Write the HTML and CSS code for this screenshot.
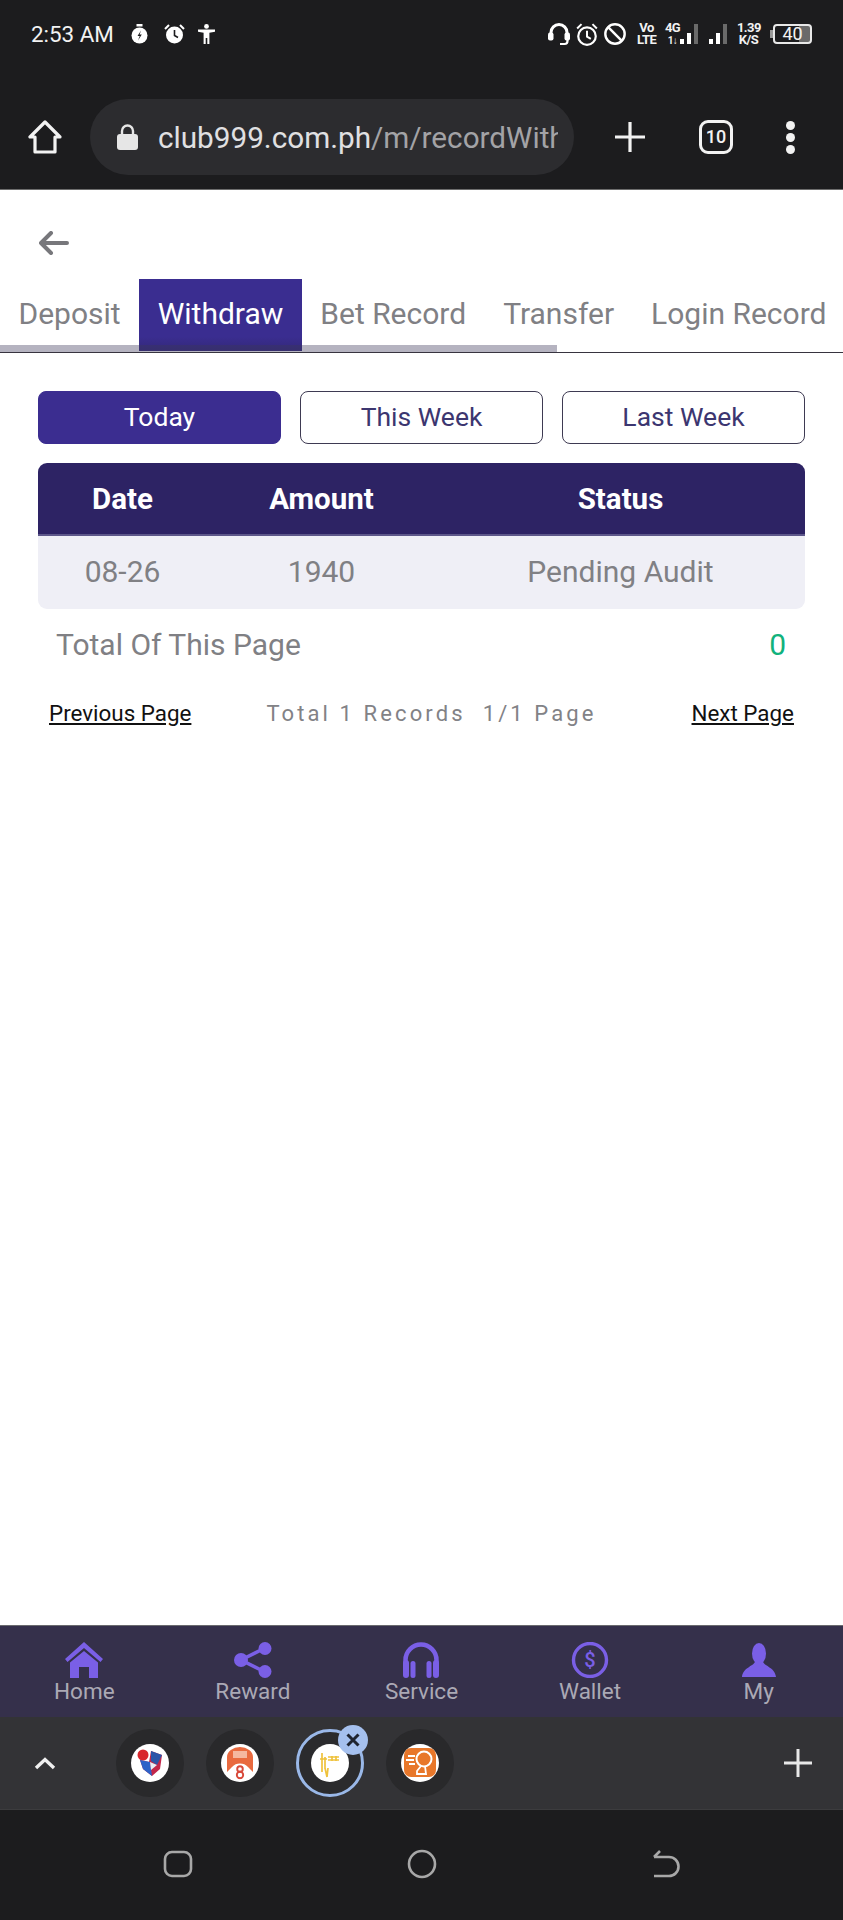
FILE: index.html
```html
<!DOCTYPE html>
<html lang="en">
<head>
    <meta charset="UTF-8">
    <meta name="viewport" content="width=device-width, initial-scale=1.0">
    <title>Withdraw Record</title>
    <link rel="stylesheet" href="styles.css">
</head>
<body>
<div id="phone">
    <!-- browser chrome -->
    <div class="status-bar">
        <div class="status-left">
            <span class="time">2:53 AM</span>
            <svg class="st-stopwatch" width="17" height="20" viewBox="0 0 17 20"><rect x="5.500" y="0" width="6" height="2.500" fill="#fff"/><circle cx="8.500" cy="11.500" r="8" fill="#fff"/><path d="M10 6.500L6.500 12h2.200L7 16.500l3.800-6H8.600z" fill="#1c1c1e"/></svg>
            <svg class="st-alarm" width="21" height="20" viewBox="0 0 21 20"><circle cx="10.500" cy="11" r="8.500" fill="#fff"/><path d="M1 5l4-4M20 5l-4-4" stroke="#fff" stroke-width="2"/><path d="M10.500 6v5.500l3.500 2" stroke="#1c1c1e" stroke-width="1.600" fill="none"/></svg>
            <svg class="st-person" width="17" height="20" viewBox="0 0 17 20"><circle cx="8.500" cy="2.400" r="2.400" fill="#fff"/><path d="M0 5.500h17v2.200l-5.600 1V20H9.300v-6H7.700v6H5.600V8.700L0 7.700z" fill="#fff"/></svg>
        </div>
        <div class="status-right">
            <svg class="st-head" width="22" height="24" viewBox="0 0 22 23"><path d="M3 15V10a8 8 0 0 1 16 0v5" stroke="#fff" stroke-width="3" fill="none"/><rect x="0" y="10" width="5.500" height="8" rx="2" fill="#fff"/><rect x="16.500" y="10" width="5.500" height="8" rx="2" fill="#fff"/><path d="M19.500 16v2.500a3 3 0 0 1-3 3H12" stroke="#fff" stroke-width="2.200" fill="none"/></svg>
            <svg class="st-clock" width="22" height="23" viewBox="1 0 20 21"><circle cx="11" cy="12" r="8" stroke="#fff" stroke-width="2" fill="none"/><path d="M11 7v5.500l3.500 2M2 5l4-4M20 5l-4-4" stroke="#fff" stroke-width="1.800" fill="none"/></svg>
            <svg class="st-block" width="22" height="22" viewBox="1 1 20 20"><circle cx="11" cy="11" r="8.800" stroke="#fff" stroke-width="2.200" fill="none"/><path d="M4.800 4.800l12.400 12.400" stroke="#fff" stroke-width="2.200"/></svg>
            <span class="st-mini volte">Vo<br>LTE</span>
            <span class="signal">
                <span class="st-mini net">4G<br><small>1↓</small></span>
                <svg width="20" height="22" viewBox="0 0 20 22"><rect x="0" y="16" width="4" height="5" fill="#fff"/><rect x="7" y="10" width="4" height="11" fill="#fff"/><rect x="14" y="1" width="4" height="20" fill="#6a6a6a"/></svg>
            </span>
            <svg class="bars2" width="22" height="22" viewBox="0 0 22 22"><rect x="1" y="16" width="4" height="5" fill="#fff"/><rect x="8" y="10" width="4" height="11" fill="#fff"/><rect x="15" y="1" width="4" height="20" fill="#6a6a6a"/></svg>
            <span class="st-mini speed">1.39<br>K/S</span>
            <span class="battery"><span class="battery-cap"></span><span class="battery-body">40</span></span>
        </div>
    </div>

    <div class="toolbar">
        <svg class="home-btn" width="34" height="34" viewBox="0 0 34 34"><path d="M17 2L2 17h5v15h20V17h5z" stroke="#f2f2f2" stroke-width="3.200" stroke-linejoin="round" fill="none"/></svg>
        <div class="url-pill">
            <svg width="21" height="26" viewBox="0 0 21 26"><path d="M5 11V7a5.500 5.500 0 0 1 11 0v4" stroke="#e6e6e6" stroke-width="2.400" fill="none"/><rect x="0" y="10" width="21" height="16" rx="3" fill="#e6e6e6"/></svg>
            <div class="url-text"><span class="url-host">club999.com.ph</span>/m/recordWithdraw</div>
        </div>
        <svg class="new-tab" width="30" height="30" viewBox="0 0 30 30"><path d="M15 0v30M0 15h30" stroke="#f2f2f2" stroke-width="3.200"/></svg>
        <div class="tab-count">10</div>
        <div class="dots"><span></span><span></span><span></span></div>
    </div>

    <!-- page -->
    <div class="page">
        <div class="back-row">
            <svg width="30" height="24" viewBox="0 0 30 24"><path d="M12 2L2 12l10 10M2 12h26" stroke="#77777b" stroke-width="4" stroke-linecap="round" stroke-linejoin="round" fill="none"/></svg>
        </div>

        <div class="tabs">
            <div class="tab">Deposit</div>
            <div class="tab active">Withdraw</div>
            <div class="tab">Bet Record</div>
            <div class="tab">Transfer</div>
            <div class="tab">Login Record</div>
            <div class="tabs-scroll"></div>
        </div>

        <div class="content">
            <div class="filters">
                <button class="filter active">Today</button>
                <button class="filter">This Week</button>
                <button class="filter">Last Week</button>
            </div>

            <div class="record-table">
                <div class="record-row head">
                    <span>Date</span><span>Amount</span><span>Status</span>
                </div>
                <div class="record-row body">
                    <span>08-26</span><span>1940</span><span>Pending Audit</span>
                </div>
            </div>

            <div class="page-total">
                <span>Total Of This Page</span>
                <span class="total-num">0</span>
            </div>

            <div class="pager">
                <a class="pager-link">Previous Page</a>
                <span class="pager-info">Total 1 Records&nbsp;&nbsp;1/1 Page</span>
                <a class="pager-link">Next Page</a>
            </div>
        </div>
    </div>

    <!-- site bottom nav -->
    <div class="bottom-nav">
        <div class="nav-item">
            <svg width="38" height="36" viewBox="0 0 38 36"><path d="M19 0L0 17l2.500 3L19 6l16.500 14 2.500-3z" fill="#7a5fe6"/><path d="M19 9L5 20.500V36h9V25h10v11h9V20.500z" fill="#7a5fe6"/></svg>
            <span>Home</span>
        </div>
        <div class="nav-item">
            <svg width="38" height="36" viewBox="0 0 38 36"><path d="M31 6L7 18l24 12" stroke="#7a5fe6" stroke-width="3.500" fill="none"/><circle cx="31" cy="6.500" r="6.500" fill="#7a5fe6"/><circle cx="7" cy="18" r="7" fill="#7a5fe6"/><circle cx="31" cy="29.500" r="6.500" fill="#7a5fe6"/></svg>
            <span>Reward</span>
        </div>
        <div class="nav-item">
            <svg width="38" height="36" viewBox="0 0 38 36"><path d="M3.500 24V18a15.500 15.500 0 0 1 31 0v6" stroke="#7a5fe6" stroke-width="4.500" fill="none"/><rect x="1" y="18" width="6" height="18" rx="3" fill="#7a5fe6"/><rect x="8.500" y="19" width="5" height="17" rx="2.500" fill="#7a5fe6"/><rect x="24.500" y="19" width="5" height="17" rx="2.500" fill="#7a5fe6"/><rect x="31" y="18" width="6" height="18" rx="3" fill="#7a5fe6"/></svg>
            <span>Service</span>
        </div>
        <div class="nav-item">
            <svg width="38" height="36" viewBox="0 0 38 36"><circle cx="19" cy="18" r="16.500" stroke="#7a5fe6" stroke-width="3.400" fill="none"/><text x="19" y="25" text-anchor="middle" class="wallet-sign">$</text></svg>
            <span>Wallet</span>
        </div>
        <div class="nav-item">
            <svg width="38" height="36" viewBox="0 0 38 36"><ellipse cx="19" cy="11.500" rx="7" ry="10.500" fill="#7a5fe6"/><path d="M15 19c0 5-12 6-13 16h34c-1-10-13-11-13-16z" fill="#7a5fe6"/></svg>
            <span>My</span>
        </div>
    </div>

    <!-- browser tab strip -->
    <div class="tab-strip">
        <svg class="strip-up" width="22" height="13" viewBox="0 0 22 13"><path d="M2 11l9-8.500 9 8.500" stroke="#f0f0f0" stroke-width="3.400" fill="none"/></svg>
        <div class="strip-tabs">
            <div class="fav">
                <svg width="38" height="38" viewBox="0 0 38 38"><circle cx="19" cy="19" r="19" fill="#fff"/><circle cx="12" cy="11" r="5.500" fill="#d8262c"/><path d="M20 7l11 4-2 14-8 7-9-7-3-9 9 2z" fill="#c2264a"/><path d="M20 7l11 4-5 10-6-4z" fill="#2c55a8"/><path d="M9 16l10 2 2 14-9-7z" fill="#2d62c8"/><path d="M19 18l7 3-6 5z" fill="#e8edf5"/></svg>
            </div>
            <div class="fav">
                <svg width="38" height="38" viewBox="0 0 38 38"><circle cx="19" cy="19" r="19" fill="#fff"/><path d="M6 28V13a13 10 0 0 1 26 0v15l-5-5a11 11 0 0 0-16 0z" fill="#e96a3f"/><path d="M12 7h14v7H12z" fill="#f5b79f"/><circle cx="19" cy="25" r="2.800" stroke="#d8493a" stroke-width="1.900" fill="none"/><circle cx="19" cy="31" r="3.200" stroke="#d8493a" stroke-width="1.900" fill="none"/></svg>
            </div>
            <div class="fav current">
                <svg width="38" height="38" viewBox="0 0 38 38"><circle cx="19" cy="19" r="19" fill="#fff"/><path d="M11 9v19M14 13v12M9 15h7M17 13h11M17 16h11M21 12v5M25 12v5M14 24l2 9M17 24l-1 9" stroke="#efc23c" stroke-width="1.700" fill="none"/></svg>
                <span class="fav-ring"></span>
                <span class="fav-close">
                    <svg width="14" height="14" viewBox="0 0 14 14"><path d="M1.500 1.500l11 11M12.500 1.500l-11 11" stroke="#1f2430" stroke-width="3"/></svg>
                </span>
            </div>
            <div class="fav">
                <svg width="38" height="38" viewBox="0 0 38 38"><circle cx="19" cy="19" r="19" fill="#fff"/><rect x="3" y="4" width="32" height="29" rx="7" fill="#e8772a"/><circle cx="23" cy="15" r="7.500" stroke="#fff" stroke-width="2" fill="none"/><path d="M7 12h7M5 16h8M8 20h6M20 22l-4 5v3h9l-1-8" stroke="#fff" stroke-width="1.800" fill="none"/></svg>
            </div>
        </div>
        <svg class="strip-add" width="28" height="28" viewBox="0 0 28 28"><path d="M14 0v28M0 14h28" stroke="#e8e8e8" stroke-width="3"/></svg>
    </div>

    <!-- system nav -->
    <div class="system-nav">
        <svg width="30" height="28" viewBox="0 0 30 28"><rect x="2" y="2" width="26" height="24" rx="7" stroke="#a8a8a8" stroke-width="2.600" fill="none"/></svg>
        <svg width="30" height="30" viewBox="0 0 30 30"><circle cx="15" cy="15" r="13" stroke="#a8a8a8" stroke-width="2.600" fill="none"/></svg>
        <svg width="30" height="30" viewBox="0 0 30 30"><path d="M3 8h15a9 9 0 0 1 0 19H3M3 8l6-6" stroke="#a8a8a8" stroke-width="2.600" fill="none"/></svg>
    </div>
</div>
</body>
</html>
```

FILE: styles.css
```css
* {
    box-sizing: border-box;
}

body {
    margin: 0;
    padding: 0;
    background-color: #fff;
    font-family: Roboto, 'Liberation Sans', sans-serif;
}

#phone {
    width: 843px;
    height: 1920px;
    display: flex;
    flex-direction: column;
    overflow: hidden;
}

/* status bar */
.status-bar {
    height: 68px;
    background-color: #1c1c1e;
    color: #fff;
    display: flex;
    justify-content: space-between;
    align-items: center;
    padding: 0 31px;
}

.status-left {
    display: flex;
    align-items: center;
}

.time {
    font-size: 22.400px;
    color: #f2f2f2;
    margin-right: 17px;
}

.st-alarm {
    margin-left: 16px;
}

.st-person {
    margin-left: 13px;
}

.status-right {
    display: flex;
    align-items: center;
}

.st-clock,
.st-block {
    margin-left: 6px;
}

.st-mini {
    font-size: 13px;
    font-weight: 700;
    letter-spacing: -0.600px;
    line-height: 12px;
    text-align: center;
    color: #f2f2f2;
}

.volte {
    width: 19px;
    margin-left: 11px;
}

.signal {
    display: flex;
    align-items: center;
    margin-left: 9px;
}

.net {
    width: 15px;
}

.net small {
    font-size: 10px;
}

.bars2 {
    margin-left: 8px;
}

.speed {
    width: 23px;
    margin-left: 7px;
}

.battery {
    display: flex;
    align-items: center;
    margin-left: 10px;
}

.battery-cap {
    width: 3px;
    height: 8px;
    background-color: #9a9a9a;
}

.battery-body {
    width: 39px;
    height: 20px;
    border: 2px solid #e8e8e8;
    border-radius: 4px;
    font-size: 18px;
    line-height: 16px;
    text-align: center;
    color: #f2f2f2;
    background: linear-gradient(90deg, #1c1c1e 70%, #6a6a6a 70%);
}

/* browser toolbar */
.toolbar {
    height: 122px;
    background-color: #1c1c1e;
    border-bottom: 1px solid #6d6d6d;
    display: flex;
    align-items: center;
    padding: 17px 0 0 28px;
}

.home-btn {
    flex: none;
}

.url-pill {
    width: 484px;
    height: 76px;
    margin-left: 28px;
    padding: 0 16px 0 27px;
    flex: none;
    background-color: #2c2c2f;
    border-radius: 38px;
    display: flex;
    align-items: center;
    gap: 20px;
}

.url-pill svg {
    flex: none;
}

.url-text {
    flex: 1;
    font-size: 29.700px;
    white-space: nowrap;
    overflow: hidden;
    color: #a3a3a6;
}

.url-host {
    color: #e0e0e2;
}

.new-tab {
    flex: none;
    margin-left: 41px;
}

.tab-count {
    width: 34px;
    height: 34px;
    margin-left: 54px;
    flex: none;
    border: 3.500px solid #f2f2f2;
    border-radius: 9px;
    color: #f2f2f2;
    font-size: 18px;
    font-weight: 500;
    line-height: 27px;
    text-align: center;
}

.dots {
    margin-left: 53px;
    display: flex;
    flex-direction: column;
    gap: 3px;
}

.dots span {
    width: 9px;
    height: 9px;
    border-radius: 50%;
    background-color: #f2f2f2;
}

/* page */
.page {
    flex: 1;
    background-color: #fff;
}

.back-row {
    height: 89px;
    padding: 41px 0 0 39px;
}

.back-row svg {
    display: block;
}

.tabs {
    position: relative;
    height: 74px;
    border-bottom: 1px solid #37343f;
    display: flex;
}

.tab {
    height: 72px;
    padding: 0 18.500px;
    font-size: 30px;
    line-height: 70px;
    color: #808084;
    white-space: nowrap;
}

.tab.active {
    color: #fff;
    background: linear-gradient(180deg, #3a2d90 80%, #33297a 100%);
}

.tabs-scroll {
    position: absolute;
    left: 0;
    bottom: 0;
    width: 557px;
    height: 7px;
    background-color: rgba(60, 55, 90, 0.38);
}

.content {
    padding: 38px 38px 0;
}

.filters {
    display: flex;
    gap: 19px;
}

.filter {
    flex: 1;
    height: 53px;
    padding: 0 0 2px;
    background-color: #fff;
    border: 1.500px solid #3e3a52;
    border-radius: 8px;
    color: #3c3670;
    font-family: inherit;
    font-size: 26.500px;
}

.filter.active {
    background-color: #3b2d90;
    border-color: #3b2d90;
    color: #fff;
}

.record-table {
    margin-top: 19px;
    border-radius: 9px;
    overflow: hidden;
}

.record-row {
    display: grid;
    grid-template-columns: 169px 229px 1fr;
    align-items: center;
    height: 73px;
    text-align: center;
}

.record-row.head {
    background-color: #2d2364;
    border-bottom: 2px solid #5d578a;
    color: #fff;
    font-size: 29.500px;
    font-weight: 700;
}

.record-row.body {
    padding-bottom: 2px;
    background-color: #efeff6;
    color: #808084;
    font-size: 30px;
}

.page-total {
    height: 71px;
    padding: 0 19px 0 18px;
    display: flex;
    justify-content: space-between;
    align-items: center;
    font-size: 30px;
    color: #808084;
}

.total-num {
    color: #12b27c;
}

.pager {
    height: 66px;
    padding: 0 11px;
    display: flex;
    justify-content: space-between;
    align-items: center;
}

.pager-link {
    font-size: 22.400px;
    color: #111;
    text-decoration: underline;
}

.pager-info {
    font-size: 22px;
    letter-spacing: 3.100px;
    color: #828286;
    margin-right: 20px;
}

/* bottom nav */
.bottom-nav {
    height: 92px;
    background-color: #35304b;
    border-top: 1px solid #6a6a6e;
    display: flex;
}

.nav-item {
    flex: 1;
    display: flex;
    flex-direction: column;
    align-items: center;
    padding-top: 16px;
    font-size: 22.500px;
    line-height: 27px;
    color: #aba9b5;
}

.nav-item svg {
    display: block;
}

.wallet-sign {
    font-family: Roboto, sans-serif;
    font-size: 20px;
    font-weight: 500;
    fill: #7a5fe6;
}

/* tab strip */
.tab-strip {
    height: 92px;
    background-color: #333336;
    display: flex;
    align-items: center;
    padding: 0 31px 0 34px;
}

.strip-tabs {
    display: flex;
    gap: 22px;
    margin-left: 60px;
    flex: 1;
}

.fav {
    position: relative;
    width: 68px;
    height: 68px;
    border-radius: 50%;
    background-color: #29292b;
    display: flex;
    align-items: center;
    justify-content: center;
}

.fav.current {
    background-color: #2b2b2d;
}

.fav-ring {
    position: absolute;
    inset: 0;
    border: 3.500px solid #9ab8e8;
    border-radius: 50%;
}

.fav-close {
    position: absolute;
    top: -4px;
    right: -4px;
    width: 30px;
    height: 30px;
    border-radius: 50%;
    background-color: #a5c0ee;
    display: flex;
    align-items: center;
    justify-content: center;
}

/* system nav */
.system-nav {
    height: 111px;
    padding-bottom: 2px;
    background-color: #1c1c1e;
    border-top: 1px solid #3c3c3e;
    display: grid;
    grid-template-columns: repeat(3, 244px);
    justify-content: center;
    justify-items: center;
    align-items: center;
}
```
